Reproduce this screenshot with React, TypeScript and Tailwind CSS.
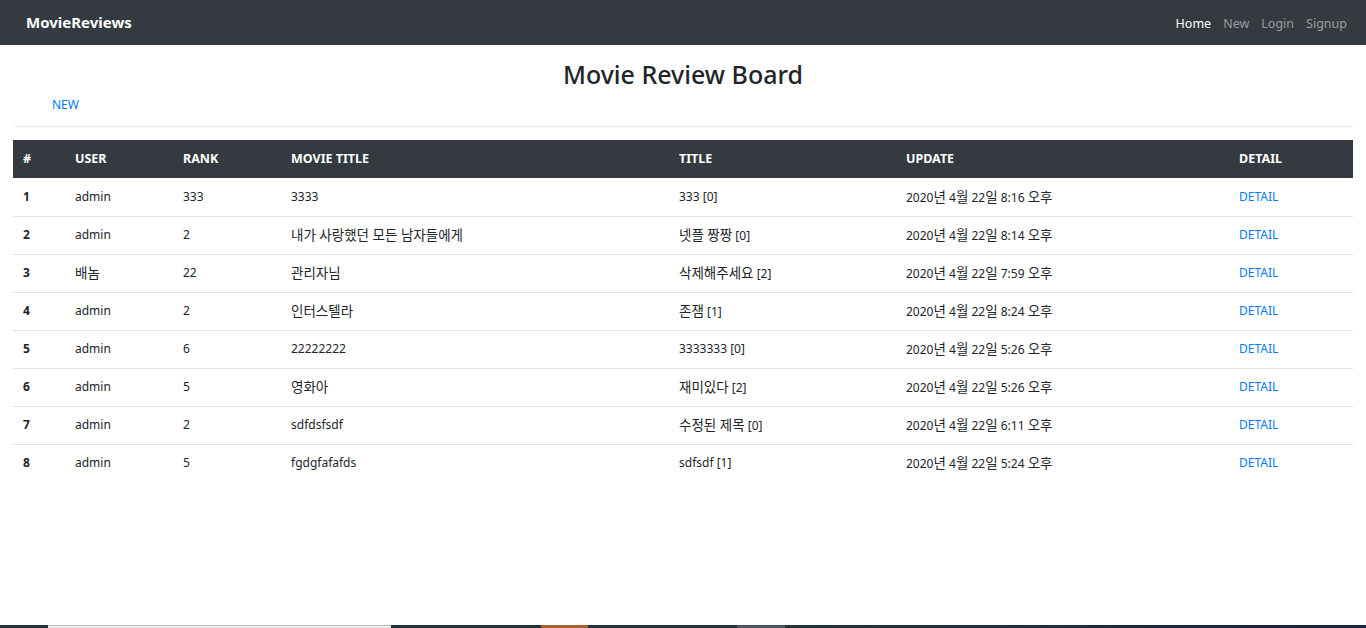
const reviews = [
  { id: 1, user: "admin", rank: 333, movie: "3333", title: "333", comments: 0, updated: "2020년 4월 22일 8:16 오후" },
  { id: 2, user: "admin", rank: 2, movie: "내가 사랑했던 모든 남자들에게", title: "넷플 짱짱", comments: 0, updated: "2020년 4월 22일 8:14 오후" },
  { id: 3, user: "배놈", rank: 22, movie: "관리자님", title: "삭제해주세요", comments: 2, updated: "2020년 4월 22일 7:59 오후" },
  { id: 4, user: "admin", rank: 2, movie: "인터스텔라", title: "존잼", comments: 1, updated: "2020년 4월 22일 8:24 오후" },
  { id: 5, user: "admin", rank: 6, movie: "22222222", title: "3333333", comments: 0, updated: "2020년 4월 22일 5:26 오후" },
  { id: 6, user: "admin", rank: 5, movie: "영화아", title: "재미있다", comments: 2, updated: "2020년 4월 22일 5:26 오후" },
  { id: 7, user: "admin", rank: 2, movie: "sdfdsfsdf", title: "수정된 제목", comments: 0, updated: "2020년 4월 22일 6:11 오후" },
  { id: 8, user: "admin", rank: 5, movie: "fgdgfafafds", title: "sdfsdf", comments: 1, updated: "2020년 4월 22일 5:24 오후" },
];

const columns = [
  { key: "id", header: "#", width: "w-[52px]" },
  { key: "user", header: "USER", width: "w-[108px]" },
  { key: "rank", header: "RANK", width: "w-[108px]" },
  { key: "movie", header: "MOVIE TITLE", width: "w-[388px]" },
  { key: "title", header: "TITLE", width: "w-[227px]" },
  { key: "updated", header: "UPDATE", width: "w-[333px]" },
  { key: "detail", header: "DETAIL", width: "" },
];

// hangul renders smaller than the original's korean font, so bump those runs a little
function Mixed({ text }: { text: string }) {
  const parts = text.split(/([가-힣]+(?: [가-힣]+)*)/);
  return (
    <>
      {parts.map((part, i) =>
        /[가-힣]/.test(part) ? (
          <span key={i} className="text-[13.5px]">
            {part}
          </span>
        ) : (
          part
        )
      )}
    </>
  );
}

function NavBar() {
  return (
    <nav className="flex h-[45px] items-center justify-between bg-[#343a40] pl-[26px] pr-[19px]">
      <a href="#" className="text-[15px] font-bold text-white">
        MovieReviews
      </a>
      <div className="flex items-center gap-[12px] pt-[3px] text-[12.5px]">
        <a href="#" className="text-white">Home</a>
        <a href="#" className="text-[#9a9da0]">New</a>
        <a href="#" className="text-[#9a9da0]">Login</a>
        <a href="#" className="text-[#9a9da0]">Signup</a>
      </div>
    </nav>
  );
}

function BottomStrip() {
  return (
    <div className="flex h-[3px] w-full">
      <div className="w-[48px] bg-[#22343a]" />
      <div className="w-[343px] border-t border-[#bdbdbd] bg-[#efefef]" />
      <div className="w-[150px] bg-[#22343a]" />
      <div className="w-[47px] bg-[#a5632f]" />
      <div className="w-[149px] bg-[#22343a]" />
      <div className="w-[48px] bg-[#4b565d]" />
      <div className="flex-1 bg-gradient-to-r from-[#22343a] to-[#1d2342]" />
    </div>
  );
}

export default function App() {
  return (
    <div
      className="flex h-screen flex-col bg-white text-[#212529]"
      style={{ fontFamily: '"Noto Sans", "Noto Sans CJK KR", sans-serif' }}
    >
      <NavBar />
      <main className="flex-1 px-[13px]">
        <h3 className="pt-[11px] text-center text-[25px] leading-[36px] font-medium">Movie Review Board</h3>
        <div className="mt-[2px] pl-[39px] leading-[18px]">
          <a href="#" className="text-[12px] text-[#007bff]">NEW</a>
        </div>
        <hr className="mt-[12px] border-[#e9ecef]" />
        <table className="mt-[13px] w-full table-fixed border-collapse text-[12px]">
          <thead>
            <tr className="h-[38px] bg-[#343a40] text-left text-[12.5px] text-white">
              {columns.map((col) => (
                <th key={col.key} className={`${col.width} px-[10px] font-bold`}>
                  {col.header}
                </th>
              ))}
            </tr>
          </thead>
          <tbody>
            {reviews.map((row, index) => (
              <tr
                key={row.id}
                className={index === reviews.length - 1 ? "h-[38px]" : "h-[38px] border-b border-[#dee2e6]"}
              >
                <td className="px-[10px] font-bold">{row.id}</td>
                <td className="px-[10px]">
                  <Mixed text={row.user} />
                </td>
                <td className="px-[10px]">{row.rank}</td>
                <td className="px-[10px]">
                  <Mixed text={row.movie} />
                </td>
                <td className="px-[10px]">
                  <Mixed text={`${row.title} [${row.comments}]`} />
                </td>
                <td className="px-[10px]">
                  <Mixed text={row.updated} />
                </td>
                <td className="px-[10px]">
                  <a href="#" className="text-[#007bff]">DETAIL</a>
                </td>
              </tr>
            ))}
          </tbody>
        </table>
      </main>
      <BottomStrip />
    </div>
  );
}
